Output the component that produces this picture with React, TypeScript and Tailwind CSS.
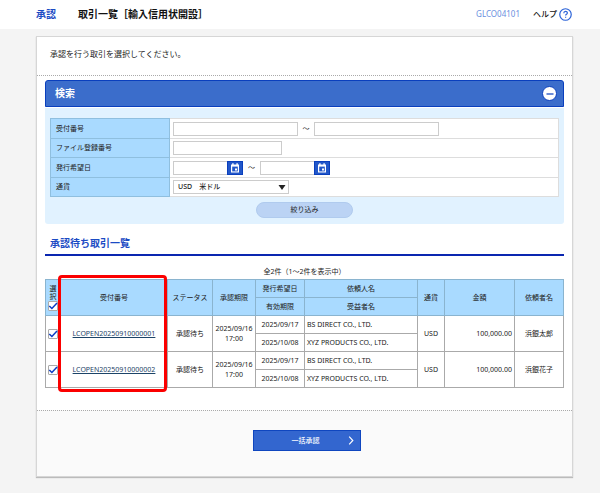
import React, { useState } from 'react';

interface Transaction {
  id: string;
  status: string;
  limitDate: string;
  limitTime: string;
  issueDate: string;
  expiryDate: string;
  applicant: string;
  beneficiary: string;
  currency: string;
  amount: string;
  requester: string;
}

const transactions: Transaction[] = [
  {
    id: 'LCOPEN20250910000001',
    status: '承認待ち',
    limitDate: '2025/09/16',
    limitTime: '17:00',
    issueDate: '2025/09/17',
    expiryDate: '2025/10/08',
    applicant: 'BS DIRECT CO., LTD.',
    beneficiary: 'XYZ PRODUCTS CO., LTD.',
    currency: 'USD',
    amount: '100,000.00',
    requester: '浜銀太郎',
  },
  {
    id: 'LCOPEN20250910000002',
    status: '承認待ち',
    limitDate: '2025/09/16',
    limitTime: '17:00',
    issueDate: '2025/09/17',
    expiryDate: '2025/10/08',
    applicant: 'BS DIRECT CO., LTD.',
    beneficiary: 'XYZ PRODUCTS CO., LTD.',
    currency: 'USD',
    amount: '100,000.00',
    requester: '浜銀花子',
  },
];

const inputClass = 'h-[14px] border border-[#cccccc] bg-white px-1 outline-none';
const labelClass = 'border border-[#8fbfdf] bg-[#a9daff] px-[5px] text-left font-normal';
const fieldClass = 'border border-[#dddddd] bg-white pl-[3px]';
const thClass = 'border border-[#8ab4cf] bg-[#a9daff] p-0 text-center font-normal';
const tdClass = 'border border-[#aaaaaa] bg-white p-0 text-center';

const CheckBox: React.FC<{ label: string; checked: boolean; onChange: () => void }> = ({ label, checked, onChange }) => (
  <label className="relative mx-auto block size-[10px]">
    <input
      type="checkbox"
      aria-label={label}
      checked={checked}
      onChange={onChange}
      className="peer block size-[10px] appearance-none rounded-[1px] border border-[#aaaaaa] bg-white"
    />
    <svg viewBox="0 0 10 10" className="pointer-events-none absolute inset-0 hidden size-[10px] peer-checked:block">
      <path d="M1.3 5 L3.9 7.5 L9 2" fill="none" stroke="#0a3cc4" strokeWidth="1.5" />
    </svg>
  </label>
);

const DateField: React.FC<{ label: string }> = ({ label }) => (
  <div className="flex">
    <input type="text" aria-label={label} className={`${inputClass} w-[54px] border-r-0`} />
    <button type="button" aria-label={`${label} カレンダー`} className="flex h-[14px] w-4 items-center justify-center border border-[#0a3fbd] bg-[#2257c9]">
      <svg viewBox="0 0 10 10" className="size-[10px]">
        <path d="M1 1.5h8v8H1z" fill="#fff" />
        <path d="M2.2 3.6h5.6v4.8H2.2z" fill="#2257c9" />
        <path d="M2.2 0.3h1.4v2H2.2zM6.4 0.3h1.4v2H6.4zM5 5.4h2v2H5z" fill="#fff" />
      </svg>
    </button>
  </div>
);

const App: React.FC = () => {
  const [open, setOpen] = useState<boolean>(true);
  const [selected, setSelected] = useState<string[]>(transactions.map((t) => t.id));

  const allSelected = selected.length === transactions.length;

  const toggle = (id: string) => {
    setSelected(selected.includes(id) ? selected.filter((s) => s !== id) : [...selected, id]);
  };

  return (
    <div className="min-h-screen bg-[#f4f4f4] font-['Noto_Sans','Noto_Sans_CJK_JP',sans-serif] text-[7px] leading-[10px] text-[#222222]">
      {/* HEADER */}
      <header className="flex h-[29px] items-center justify-between bg-white pr-7 pb-px pl-9">
        <div className="flex items-center gap-[22px] text-[10px] leading-[14px] font-bold">
          <span className="text-[#1b4bc4]">承認</span>
          <h1 className="text-[#111111]">取引一覧［輸入信用状開設］</h1>
        </div>
        <div className="flex items-center gap-[13px] text-[8px]">
          <span className="text-[#6a8fe0]">GLCO04101</span>
          <a href="#help" className="flex items-center gap-[2px] font-medium text-[#111111]">
            ヘルプ
            <svg viewBox="0 0 12 12" className="size-[13px]">
              <circle cx="6" cy="6" r="5.3" fill="#fff" stroke="#2a62d8" strokeWidth="1.1" />
              <path d="M4.4 4.8c0-2.3 3.3-2.2 3.3-.2 0 1.2-1.6 1.2-1.6 2.4M6.1 8v1.1" fill="none" stroke="#2a62d8" strokeWidth="1.1" />
            </svg>
          </a>
        </div>
      </header>

      <main className="pt-[7px] pr-[27px] pb-4 pl-9">
        <div className="border border-[#d6d6d6] bg-white shadow-[0_1px_1px_#bbbbbb]">
          <p className="border-b border-dotted border-[#aaaaaa] px-[13px] pt-3 pb-4 text-[8px]">
            承認を行う取引を選択してください。
          </p>

          <div className="px-2 pt-1 pb-[22px]">
            {/* SEARCH */}
            <section>
              <div className="flex h-[27px] items-center justify-between rounded-t-[3px] border border-[#0a3fbd] bg-[#3b6dcb] pr-[6px] pl-[9px]">
                <h2 className="pb-px text-[10px] leading-[14px] font-bold text-white">検索</h2>
                <button
                  type="button"
                  aria-label="検索条件の開閉"
                  onClick={() => setOpen(!open)}
                  className="flex size-[15px] items-center justify-center rounded-full border border-[#0a3fbd] bg-white"
                >
                  <svg viewBox="0 0 8 8" className="size-2">
                    <path d={open ? 'M0.5 4h7' : 'M0.5 4h7M4 0.5v7'} stroke="#0a3fbd" strokeWidth="1.2" />
                  </svg>
                </button>
              </div>
              {open && (
                <form className="mt-px rounded-b-[3px] bg-[#e1f2ff] px-[5px] pt-[10px] pb-[6px]" onSubmit={(e) => e.preventDefault()}>
                  <table className="w-full border-collapse">
                    <tbody>
                      <tr className="h-5">
                        <th scope="row" className={`${labelClass} w-[119px]`}>受付番号</th>
                        <td className={fieldClass}>
                          <div className="flex items-center">
                            <input type="text" aria-label="受付番号 開始" className={`${inputClass} w-[125px]`} />
                            <span className="w-4 text-center">～</span>
                            <input type="text" aria-label="受付番号 終了" className={`${inputClass} w-[125px]`} />
                          </div>
                        </td>
                      </tr>
                      <tr className="h-[19px]">
                        <th scope="row" className={labelClass}>
                          <label htmlFor="file-no">ファイル登録番号</label>
                        </th>
                        <td className={fieldClass}>
                          <input id="file-no" type="text" className={`${inputClass} block w-[109px]`} />
                        </td>
                      </tr>
                      <tr className="h-5">
                        <th scope="row" className={labelClass}>発行希望日</th>
                        <td className={fieldClass}>
                          <div className="flex items-center">
                            <DateField label="発行希望日 開始" />
                            <span className="w-[17px] text-center">～</span>
                            <DateField label="発行希望日 終了" />
                          </div>
                        </td>
                      </tr>
                      <tr className="h-[19px]">
                        <th scope="row" className={labelClass}>
                          <label htmlFor="currency">通貨</label>
                        </th>
                        <td className={fieldClass}>
                          <div className="relative w-[116px]">
                            <select id="currency" className="block h-[14px] w-full appearance-none border border-[#cccccc] bg-white px-1 font-medium">
                              <option>USD　米ドル</option>
                            </select>
                            <svg viewBox="0 0 8 5" className="pointer-events-none absolute top-[5px] right-[3px] h-[5px] w-2">
                              <path d="M0.5 0h7L4 5z" fill="#222" />
                            </svg>
                          </div>
                        </td>
                      </tr>
                    </tbody>
                  </table>
                  <button type="submit" className="mx-auto mt-[5px] block h-4 w-[97px] rounded-full border border-[#b0cbee] bg-[#bbd3f4]">
                    絞り込み
                  </button>
                </form>
              )}
            </section>

            {/* LIST */}
            <section>
              <h2 className="mt-3 border-b-2 border-[#0a26b0] px-[5px] pb-1 text-[10px] leading-[14px] font-bold text-[#1b4bc4]">
                承認待ち取引一覧
              </h2>
              <p className="mt-[11px] mb-[2px] text-center">全2件（1～2件を表示中）</p>
              <div className="relative">
                <table className="w-full table-fixed border-collapse">
                  <colgroup>
                    <col className="w-[15px]" />
                    <col className="w-[107px]" />
                    <col className="w-[45px]" />
                    <col className="w-[43px]" />
                    <col className="w-[49px]" />
                    <col className="w-[113px]" />
                    <col className="w-[27px]" />
                    <col className="w-[70px]" />
                    <col className="w-[49px]" />
                  </colgroup>
                  <thead>
                    <tr className="h-[18px]">
                      <th rowSpan={2} className={`${thClass} leading-[8px]`}>
                        選<br />択
                        <CheckBox
                          label="すべて選択"
                          checked={allSelected}
                          onChange={() => setSelected(allSelected ? [] : transactions.map((t) => t.id))}
                        />
                      </th>
                      <th rowSpan={2} className={thClass}>受付番号</th>
                      <th rowSpan={2} className={thClass}>ステータス</th>
                      <th rowSpan={2} className={thClass}>承認期限</th>
                      <th className={thClass}>発行希望日</th>
                      <th className={thClass}>依頼人名</th>
                      <th rowSpan={2} className={thClass}>通貨</th>
                      <th rowSpan={2} className={thClass}>金額</th>
                      <th rowSpan={2} className={thClass}>依頼者名</th>
                    </tr>
                    <tr className="h-[18px]">
                      <th className={thClass}>有効期限</th>
                      <th className={thClass}>受益者名</th>
                    </tr>
                  </thead>
                  <tbody>
                    {transactions.map((t) => (
                      <React.Fragment key={t.id}>
                        <tr className="h-[18px]">
                          <td rowSpan={2} className={tdClass}>
                            <CheckBox label={`${t.id}を選択`} checked={selected.includes(t.id)} onChange={() => toggle(t.id)} />
                          </td>
                          <td rowSpan={2} className={tdClass}>
                            <a href={`#${t.id}`} className="text-[#1c4468] underline">{t.id}</a>
                          </td>
                          <td rowSpan={2} className={tdClass}>{t.status}</td>
                          <td rowSpan={2} className={tdClass}>
                            {t.limitDate}<br />{t.limitTime}
                          </td>
                          <td className={tdClass}>{t.issueDate}</td>
                          <td className="border border-[#aaaaaa] bg-white py-0 pr-0 pl-[2px] text-left">{t.applicant}</td>
                          <td rowSpan={2} className={tdClass}>{t.currency}</td>
                          <td rowSpan={2} className="border border-[#aaaaaa] bg-white py-0 pr-[2px] pl-0 text-right">{t.amount}</td>
                          <td rowSpan={2} className={tdClass}>{t.requester}</td>
                        </tr>
                        <tr className="h-[18px]">
                          <td className={tdClass}>{t.expiryDate}</td>
                          <td className="border border-[#aaaaaa] bg-white py-0 pr-0 pl-[2px] text-left">{t.beneficiary}</td>
                        </tr>
                      </React.Fragment>
                    ))}
                  </tbody>
                </table>
                {/* highlight around the 受付番号 column */}
                <div className="pointer-events-none absolute -top-1 -bottom-1 left-[13px] w-[21%] rounded-[4px] border-3 border-[#fb0000]" />
              </div>
            </section>
          </div>

          {/* FOOTER */}
          <div className="border-t border-dotted border-[#aaaaaa] bg-[#fafafa] pt-[19px] pb-[25px] pl-1">
            <button type="button" className="mx-auto flex h-[21px] w-[108px] items-center border border-[#0f46bf] bg-[#3366cf] px-[6px] text-white">
              <span className="flex-1 pl-1 text-center font-medium">一括承認</span>
              <svg viewBox="0 0 6 10" className="h-[9px] w-[6px]">
                <path d="M1 0.8 L5 5 L1 9.2" fill="none" stroke="#fff" strokeWidth="1.3" />
              </svg>
            </button>
          </div>
        </div>
      </main>
    </div>
  );
};

export default App;
